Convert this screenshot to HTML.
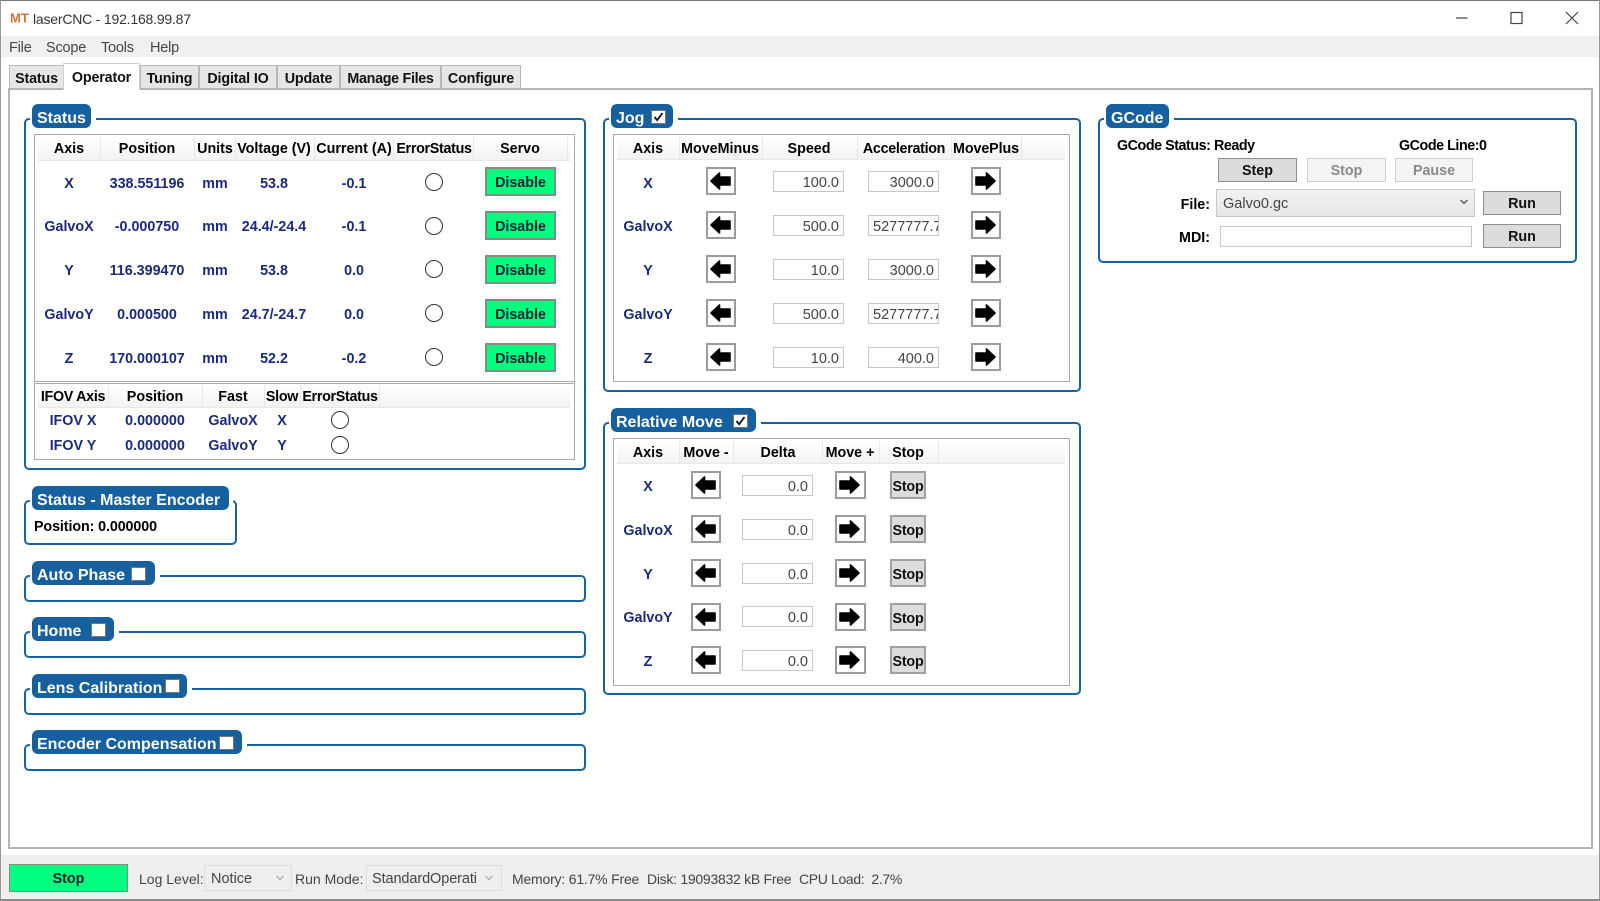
<!DOCTYPE html>
<html><head><meta charset="utf-8"><title>laserCNC</title>
<style>
html,body{margin:0;padding:0;background:#fff}
#r{position:relative;width:1600px;height:901px;overflow:hidden;background:#fff;font:bold 14.3px "Liberation Sans",sans-serif;color:#000;filter:blur(.3px)}
#r div,#r span{position:absolute;box-sizing:border-box}
.c{transform:translate(-50%,-50%);white-space:nowrap}
.c.n{transform:translate(-50%,calc(-50% + 1px))}
.l{transform:translateY(-50%);white-space:nowrap}
.rr{transform:translate(-100%,-50%);white-space:nowrap}
.n{color:#1b2a7c}
.reg{font-weight:normal;color:#444}
.tab{top:65px;height:23px;background:#e6e6e6;border:1.5px solid #b8b8b8;border-bottom:0;text-align:center;line-height:27px;color:#111;letter-spacing:-.15px}
.g{border:2px solid #1763a3;border-radius:5px;background:#fff}
.m{background:#fff;height:5px}
.tag{background:#17609f;border-radius:6px;height:24px;color:#fff;font-size:16px;line-height:29px;padding-left:5px;white-space:nowrap}
.cb{width:15px;height:14px;background:#fff;border:1.5px solid #777}
.box{border:1.5px solid #a9a9a9;background:#fff}
.h{background:linear-gradient(#fff,#f2f2f2);border-bottom:1px solid #e8e8e8}
.s{width:1px;background:#e8e8e8}
.d{left:485px;width:71px;height:29px;background:#00ff7f;border:2px solid #7f8f85;text-align:center;line-height:29px;color:#0a2030}
.o{width:18px;height:18px;border:1.5px solid #333;border-radius:50%;background:#fff;transform:translate(-50%,-50%)}
.a{width:30px;height:28px;background:#fff;border:2px solid #9c9c9c}
.a svg{position:absolute;left:0;top:0}
.i{height:21px;width:71px;background:#fff;border:1.5px solid #c6c6ce;font-weight:normal;color:#444;font-size:14.5px;line-height:22px;text-align:right;padding-right:4px;overflow:hidden;white-space:nowrap}
.il{text-align:left;padding:0 0 0 4px}
.b{background:#dcdcdc;border:1.5px solid #8e8e8e;text-align:center;color:#111}
.st{left:890px;width:36px;height:28px;border-width:2px;border-color:#a0a0a0;line-height:29px;font-size:14.3px;letter-spacing:-.2px}
.dis{background:#f4f4f4;border-color:#cfcfcf;color:#8a8a8a}
.sel{background:linear-gradient(#f2f2f2,#e6e6e6);border:1.5px solid #c8c8c8}
.nar{letter-spacing:-.3px}
.bt{line-height:25px}
</style></head><body>
<div id="r">
<svg width="0" height="0" style="position:absolute"><defs>
<symbol id="al" viewBox="0 0 26 24"><path d="M3 12 L11.5 4 V8 H22 V16 H11.5 V20 Z" fill="#000" stroke="#000" stroke-width="1.6" stroke-linejoin="round"/></symbol>
<symbol id="ar" viewBox="0 0 26 24"><path d="M22 12 L13.5 4 V8 H3 V16 H13.5 V20 Z" fill="#000" stroke="#000" stroke-width="1.6" stroke-linejoin="round"/></symbol>
</defs></svg>

<!-- window frame -->
<div style="left:0;top:0;width:1600px;height:1px;background:#777"></div>
<div style="left:0;top:0;width:1px;height:901px;background:#999"></div>
<div style="left:1599px;top:0;width:1px;height:901px;background:#999"></div>
<div style="left:1px;top:36px;width:1598px;height:21px;background:#f0f0f0"></div>
<div class="l" style="left:10px;top:18px;color:#d2703a;font-size:13px">MT</div>
<div class="l reg" style="left:33px;top:19px;font-size:14px;color:#333;letter-spacing:-.2px">laserCNC - 192.168.99.87</div>
<svg style="position:absolute;left:1450px;top:6px" width="140" height="24" fill="none" stroke="#444" stroke-width="1.2"><path d="M6 12H17.5"/><rect x="61" y="6.5" width="11" height="11"/><path d="M116 6L128 18M128 6L116 18"/></svg>
<div class="l reg" style="left:9px;top:48px;font-size:14.5px;letter-spacing:-.2px">File</div>
<div class="l reg" style="left:46px;top:48px;font-size:14.5px;letter-spacing:-.2px">Scope</div>
<div class="l reg" style="left:101px;top:48px;font-size:14.5px;letter-spacing:-.2px">Tools</div>
<div class="l reg" style="left:150px;top:48px;font-size:14.5px;letter-spacing:-.2px">Help</div>

<!-- tabs -->
<div class="tab" style="left:9px;width:55px">Status</div>
<div class="tab" style="left:140px;width:59px">Tuning</div>
<div class="tab" style="left:199px;width:78px">Digital IO</div>
<div class="tab" style="left:277px;width:63px">Update</div>
<div class="tab nar" style="left:340px;width:101px">Manage Files</div>
<div class="tab" style="left:441px;width:80px">Configure</div>
<div style="left:8px;top:88px;width:1585px;height:761px;border:2px solid #b4b4b4;background:#fff"></div>
<div class="tab" style="left:63px;width:77px;top:63px;height:27px;background:#fff;border-color:#d0d0d0;line-height:28px;z-index:2">Operator</div>

<!-- STATUS group -->
<div class="g" style="left:24px;top:118px;width:562px;height:352px"></div>
<div class="m" style="left:30px;top:116px;width:66px"></div>
<div class="tag" style="left:32px;top:104px;width:59px">Status</div>
<div class="box" style="left:34px;top:134px;width:541px;height:248px"></div>
<div class="h" style="left:38px;top:137px;width:532px;height:24px"></div>
<div class="s" style="left:100px;top:137px;height:24px"></div><div class="s" style="left:194px;top:137px;height:24px"></div><div class="s" style="left:235px;top:137px;height:24px"></div><div class="s" style="left:314px;top:137px;height:24px"></div><div class="s" style="left:393px;top:137px;height:24px"></div><div class="s" style="left:473px;top:137px;height:24px"></div><div class="s" style="left:567px;top:137px;height:24px"></div>
<div class="c" style="left:69px;top:149px">Axis</div><div class="c" style="left:147px;top:149px">Position</div><div class="c" style="left:215px;top:149px">Units</div><div class="c" style="left:274px;top:149px">Voltage (V)</div><div class="c" style="left:354px;top:149px">Current (A)</div><div class="c nar" style="left:434px;top:149px">ErrorStatus</div><div class="c" style="left:520px;top:149px">Servo</div>

<div class="c n" style="left:69px;top:183px">X</div><div class="c n" style="left:147px;top:183px">338.551196</div><div class="c n" style="left:215px;top:183px">mm</div><div class="c n" style="left:274px;top:183px">53.8</div><div class="c n" style="left:354px;top:183px">-0.1</div><span class="o" style="left:434px;top:182px"></span><div class="d" style="top:167px">Disable</div>
<div class="c n" style="left:69px;top:226px">GalvoX</div><div class="c n" style="left:147px;top:226px">-0.000750</div><div class="c n" style="left:215px;top:226px">mm</div><div class="c n" style="left:274px;top:226px">24.4/-24.4</div><div class="c n" style="left:354px;top:226px">-0.1</div><span class="o" style="left:434px;top:226px"></span><div class="d" style="top:211px">Disable</div>
<div class="c n" style="left:69px;top:270px">Y</div><div class="c n" style="left:147px;top:270px">116.399470</div><div class="c n" style="left:215px;top:270px">mm</div><div class="c n" style="left:274px;top:270px">53.8</div><div class="c n" style="left:354px;top:270px">0.0</div><span class="o" style="left:434px;top:269px"></span><div class="d" style="top:255px">Disable</div>
<div class="c n" style="left:69px;top:314px">GalvoY</div><div class="c n" style="left:147px;top:314px">0.000500</div><div class="c n" style="left:215px;top:314px">mm</div><div class="c n" style="left:274px;top:314px">24.7/-24.7</div><div class="c n" style="left:354px;top:314px">0.0</div><span class="o" style="left:434px;top:313px"></span><div class="d" style="top:299px">Disable</div>
<div class="c n" style="left:69px;top:358px">Z</div><div class="c n" style="left:147px;top:358px">170.000107</div><div class="c n" style="left:215px;top:358px">mm</div><div class="c n" style="left:274px;top:358px">52.2</div><div class="c n" style="left:354px;top:358px">-0.2</div><span class="o" style="left:434px;top:357px"></span><div class="d" style="top:343px">Disable</div>

<div class="box" style="left:34px;top:383px;width:541px;height:77px"></div>
<div class="h" style="left:38px;top:385px;width:532px;height:23px"></div>
<div class="s" style="left:108px;top:385px;height:23px"></div><div class="s" style="left:202px;top:385px;height:23px"></div><div class="s" style="left:264px;top:385px;height:23px"></div><div class="s" style="left:300px;top:385px;height:23px"></div><div class="s" style="left:379px;top:385px;height:23px"></div>
<div class="c nar" style="left:73px;top:397px">IFOV Axis</div><div class="c" style="left:155px;top:397px">Position</div><div class="c" style="left:233px;top:397px">Fast</div><div class="c nar" style="left:282px;top:397px">Slow</div><div class="c nar" style="left:340px;top:397px">ErrorStatus</div>
<div class="c n" style="left:73px;top:420px">IFOV X</div><div class="c n" style="left:155px;top:420px">0.000000</div><div class="c n" style="left:233px;top:420px">GalvoX</div><div class="c n" style="left:282px;top:420px">X</div><span class="o" style="left:340px;top:420px"></span>
<div class="c n" style="left:73px;top:445px">IFOV Y</div><div class="c n" style="left:155px;top:445px">0.000000</div><div class="c n" style="left:233px;top:445px">GalvoY</div><div class="c n" style="left:282px;top:445px">Y</div><span class="o" style="left:340px;top:445px"></span>

<!-- Master encoder -->
<div class="g" style="left:24px;top:500px;width:213px;height:45px"></div>
<div class="m" style="left:30px;top:498px;width:203px"></div>
<div class="tag" style="left:32px;top:486px;width:197px">Status - Master Encoder</div>
<div class="l" style="left:34px;top:527px;letter-spacing:-.1px">Position: 0.000000</div>

<!-- Collapsed groups -->
<div class="g" style="left:24px;top:575px;width:562px;height:27px"></div>
<div class="m" style="left:30px;top:573px;width:130px"></div>
<div class="tag" style="left:32px;top:561px;width:123px">Auto Phase</div>
<div class="cb" style="left:131px;top:567px"></div>

<div class="g" style="left:24px;top:631px;width:562px;height:27px"></div>
<div class="m" style="left:30px;top:629px;width:89px"></div>
<div class="tag" style="left:32px;top:617px;width:82px">Home</div>
<div class="cb" style="left:91px;top:623px"></div>

<div class="g" style="left:24px;top:688px;width:562px;height:27px"></div>
<div class="m" style="left:30px;top:686px;width:162px"></div>
<div class="tag" style="left:32px;top:674px;width:155px">Lens Calibration</div>
<div class="cb" style="left:165px;top:679px"></div>

<div class="g" style="left:24px;top:744px;width:562px;height:27px"></div>
<div class="m" style="left:30px;top:742px;width:217px"></div>
<div class="tag" style="left:32px;top:730px;width:210px">Encoder Compensation</div>
<div class="cb" style="left:219px;top:736px"></div>

<!-- JOG -->
<div class="g" style="left:603px;top:118px;width:478px;height:274px"></div>
<div class="m" style="left:609px;top:116px;width:69px"></div>
<div class="tag" style="left:611px;top:104px;width:62px">Jog</div>
<div class="cb" style="left:651px;top:110px;width:15px"><svg style="position:absolute;left:0;top:0" width="13" height="12" fill="none" stroke="#111" stroke-width="1.8"><path d="M2.5 6L5.2 9.2L10.5 2"/></svg></div>
<div class="box" style="left:613px;top:134px;width:457px;height:248px"></div>
<div class="h" style="left:617px;top:137px;width:448px;height:23px"></div>
<div class="s" style="left:679px;top:137px;height:23px"></div><div class="s" style="left:762px;top:137px;height:23px"></div><div class="s" style="left:857px;top:137px;height:23px"></div><div class="s" style="left:951px;top:137px;height:23px"></div><div class="s" style="left:1021px;top:137px;height:23px"></div>
<div class="c" style="left:648px;top:149px">Axis</div><div class="c" style="left:720px;top:149px">MoveMinus</div><div class="c" style="left:809px;top:149px">Speed</div><div class="c nar" style="left:904px;top:149px">Acceleration</div><div class="c" style="left:986px;top:149px;letter-spacing:-.1px">MovePlus</div>

<div class="c n" style="left:648px;top:183px">X</div>
<div class="a" style="left:706px;top:167px"><svg width="26" height="24"><use href="#al"/></svg></div>
<div class="i" style="left:773px;top:171px">100.0</div><div class="i" style="left:868px;top:171px">3000.0</div>
<div class="a" style="left:971px;top:167px"><svg width="26" height="24"><use href="#ar"/></svg></div>

<div class="c n" style="left:648px;top:226px">GalvoX</div>
<div class="a" style="left:706px;top:211px"><svg width="26" height="24"><use href="#al"/></svg></div>
<div class="i" style="left:773px;top:215px">500.0</div><div class="i il" style="left:868px;top:215px">5277777.77</div>
<div class="a" style="left:971px;top:211px"><svg width="26" height="24"><use href="#ar"/></svg></div>

<div class="c n" style="left:648px;top:270px">Y</div>
<div class="a" style="left:706px;top:255px"><svg width="26" height="24"><use href="#al"/></svg></div>
<div class="i" style="left:773px;top:259px">10.0</div><div class="i" style="left:868px;top:259px">3000.0</div>
<div class="a" style="left:971px;top:255px"><svg width="26" height="24"><use href="#ar"/></svg></div>

<div class="c n" style="left:648px;top:314px">GalvoY</div>
<div class="a" style="left:706px;top:299px"><svg width="26" height="24"><use href="#al"/></svg></div>
<div class="i" style="left:773px;top:303px">500.0</div><div class="i il" style="left:868px;top:303px">5277777.77</div>
<div class="a" style="left:971px;top:299px"><svg width="26" height="24"><use href="#ar"/></svg></div>

<div class="c n" style="left:648px;top:358px">Z</div>
<div class="a" style="left:706px;top:343px"><svg width="26" height="24"><use href="#al"/></svg></div>
<div class="i" style="left:773px;top:347px">10.0</div><div class="i" style="left:868px;top:347px">400.0</div>
<div class="a" style="left:971px;top:343px"><svg width="26" height="24"><use href="#ar"/></svg></div>

<!-- RELATIVE MOVE -->
<div class="g" style="left:603px;top:422px;width:478px;height:273px"></div>
<div class="m" style="left:609px;top:420px;width:152px"></div>
<div class="tag" style="left:611px;top:408px;width:145px">Relative Move</div>
<div class="cb" style="left:733px;top:414px;width:15px"><svg style="position:absolute;left:0;top:0" width="13" height="12" fill="none" stroke="#111" stroke-width="1.8"><path d="M2.5 6L5.2 9.2L10.5 2"/></svg></div>
<div class="box" style="left:613px;top:438px;width:457px;height:248px"></div>
<div class="h" style="left:617px;top:441px;width:448px;height:23px"></div>
<div class="s" style="left:679px;top:441px;height:23px"></div><div class="s" style="left:733px;top:441px;height:23px"></div><div class="s" style="left:822px;top:441px;height:23px"></div><div class="s" style="left:879px;top:441px;height:23px"></div><div class="s" style="left:938px;top:441px;height:23px"></div>
<div class="c" style="left:648px;top:453px">Axis</div><div class="c" style="left:706px;top:453px">Move -</div><div class="c" style="left:778px;top:453px">Delta</div><div class="c" style="left:850px;top:453px">Move +</div><div class="c" style="left:908px;top:453px">Stop</div>

<div class="c n" style="left:648px;top:486px">X</div>
<div class="a" style="left:691px;top:471px"><svg width="26" height="24"><use href="#al"/></svg></div>
<div class="i" style="left:742px;top:475px">0.0</div>
<div class="a" style="left:835px;top:471px;width:31px"><svg width="26" height="24"><use href="#ar"/></svg></div>
<div class="b st" style="top:471px">Stop</div>

<div class="c n" style="left:648px;top:530px">GalvoX</div>
<div class="a" style="left:691px;top:515px"><svg width="26" height="24"><use href="#al"/></svg></div>
<div class="i" style="left:742px;top:519px">0.0</div>
<div class="a" style="left:835px;top:515px;width:31px"><svg width="26" height="24"><use href="#ar"/></svg></div>
<div class="b st" style="top:515px">Stop</div>

<div class="c n" style="left:648px;top:574px">Y</div>
<div class="a" style="left:691px;top:559px"><svg width="26" height="24"><use href="#al"/></svg></div>
<div class="i" style="left:742px;top:563px">0.0</div>
<div class="a" style="left:835px;top:559px;width:31px"><svg width="26" height="24"><use href="#ar"/></svg></div>
<div class="b st" style="top:559px">Stop</div>

<div class="c n" style="left:648px;top:617px">GalvoY</div>
<div class="a" style="left:691px;top:603px"><svg width="26" height="24"><use href="#al"/></svg></div>
<div class="i" style="left:742px;top:606px">0.0</div>
<div class="a" style="left:835px;top:603px;width:31px"><svg width="26" height="24"><use href="#ar"/></svg></div>
<div class="b st" style="top:603px">Stop</div>

<div class="c n" style="left:648px;top:661px">Z</div>
<div class="a" style="left:691px;top:646px"><svg width="26" height="24"><use href="#al"/></svg></div>
<div class="i" style="left:742px;top:650px">0.0</div>
<div class="a" style="left:835px;top:646px;width:31px"><svg width="26" height="24"><use href="#ar"/></svg></div>
<div class="b st" style="top:646px">Stop</div>

<!-- GCODE -->
<div class="g" style="left:1098px;top:118px;width:479px;height:145px"></div>
<div class="m" style="left:1104px;top:116px;width:70px"></div>
<div class="tag" style="left:1106px;top:104px;width:63px">GCode</div>
<div class="l" style="left:1117px;top:146px;letter-spacing:-.45px">GCode Status: Ready</div>
<div class="l" style="left:1399px;top:146px;letter-spacing:-.45px">GCode Line:0</div>
<div class="b bt" style="left:1218px;top:158px;width:79px;height:24px">Step</div>
<div class="b dis bt" style="left:1307px;top:158px;width:79px;height:24px">Stop</div>
<div class="b dis bt" style="left:1395px;top:158px;width:78px;height:24px">Pause</div>
<div class="rr" style="left:1210px;top:205px">File:</div>
<div class="sel" style="left:1216px;top:189px;width:259px;height:28px"></div>
<div class="l reg" style="left:1223px;top:204px;font-size:14.5px">Galvo0.gc</div>
<svg style="position:absolute;left:1459px;top:198px" width="10" height="8" fill="none" stroke="#555" stroke-width="1.3"><path d="M1.5 2L5 5.5L8.5 2"/></svg>
<div class="b bt" style="left:1483px;top:191px;width:78px;height:24px">Run</div>
<div class="rr" style="left:1210px;top:238px">MDI:</div>
<div class="i" style="left:1220px;top:226px;width:252px"></div>
<div class="b bt" style="left:1483px;top:224px;width:78px;height:24px">Run</div>

<!-- bottom bar -->
<div style="left:1px;top:855px;width:1598px;height:44px;background:#f0eeed"></div>
<div style="left:0;top:899px;width:1600px;height:2px;background:#8a8a8a"></div>
<div style="left:9px;top:864px;width:119px;height:28px;background:#00ff7f;border:1.5px solid #7f8f85;text-align:center;line-height:29px;color:#0a2030">Stop</div>
<div class="l reg" style="left:139px;top:879px;font-size:14px">Log Level:</div>
<div class="sel" style="left:204px;top:865px;width:88px;height:26px;background:#eeeeee;border-color:#ddd"></div>
<div class="l reg" style="left:211px;top:879px;font-size:14.5px">Notice</div>
<svg style="position:absolute;left:275px;top:874px" width="10" height="8" fill="none" stroke="#aaa" stroke-width="1.2"><path d="M1.5 2L5 5.5L8.5 2"/></svg>
<div class="l reg" style="left:295px;top:879px;font-size:14px">Run Mode:</div>
<div class="sel" style="left:366px;top:865px;width:136px;height:26px;background:#eeeeee;border-color:#ddd"></div>
<div class="l reg" style="left:372px;top:879px;font-size:14.5px;letter-spacing:-.1px">StandardOperati</div>
<svg style="position:absolute;left:484px;top:874px" width="10" height="8" fill="none" stroke="#aaa" stroke-width="1.2"><path d="M1.5 2L5 5.5L8.5 2"/></svg>
<div class="l reg" style="left:512px;top:879px;font-size:14px;letter-spacing:-.2px">Memory: 61.7% Free</div>
<div class="l reg" style="left:647px;top:879px;font-size:14px;letter-spacing:-.27px">Disk: 19093832 kB Free</div>
<div class="l reg" style="left:799px;top:879px;font-size:14px;letter-spacing:-.35px">CPU Load:&nbsp; 2.7%</div>
</div>
</body></html>
